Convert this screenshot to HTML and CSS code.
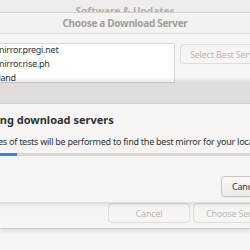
FILE: index.html
```html
<!DOCTYPE html>
<html lang="en">
<head>
  <meta charset="UTF-8">
  <title>Choose a Download Server</title>
  <link rel="stylesheet" href="styles.css">
</head>
<body>
  <div class="parent-title">Software &amp; Updates</div>

  <div class="window-head">Choose a Download Server</div>
  <div class="window-body">
    <div class="mirror-list">
      <div class="mirror-row">mirror.pregi.net</div>
      <div class="mirror-row">mirror.rise.ph</div>
      <div class="mirror-row country">Poland</div>
    </div>
    <button class="btn btn-faded select-best">Select Best Server</button>
  </div>

  <div class="dialog">
    <div class="dialog-titlebar"></div>
    <div class="dialog-content">
      <div class="dialog-heading">Testing download servers</div>
      <div class="dialog-text">A series of tests will be performed to find the best mirror for your location.</div>
      <div class="progress"><div class="progress-fill" style="width: 41px"></div></div>
      <div class="dialog-actions">
        <button class="btn">Cancel</button>
      </div>
    </div>
  </div>

  <div class="window-foot">
    <button class="btn btn-faded foot-cancel">Cancel</button>
    <button class="btn btn-faded foot-choose">Choose Server</button>
  </div>
</body>
</html>
```

FILE: styles.css
```css
body {
  margin: 0;
  width: 250px;
  height: 250px;
  overflow: hidden;
  background: #f6f5f4;
  font-family: 'Noto Sans', 'DejaVu Sans', sans-serif;
  color: #2e3436;
}
.parent-title {
  height: 12px;
  overflow: hidden;
  padding-top: 5px;
  box-sizing: border-box;
  text-align: center;
  font-size: 10px;
  font-weight: bold;
  line-height: 12px;
  color: #b3afab;
  background: #efedec;
}
.window-head {
  height: 20px;
  line-height: 21px;
  text-align: center;
  font-size: 10px;
  font-weight: bold;
  letter-spacing: -0.3px;
  color: #a29e9a;
  background: #f3f2f1;
  border-top: 1px solid #d3cfcb;
  border-bottom: 1px solid #dcd8d4;
}
.window-body {
  display: flex;
  gap: 5px;
  height: 40px;
  padding-top: 9px;
  overflow: hidden;
}
.mirror-list {
  width: 174px;
  background: #fff;
  border: 1px solid #dcd8d4;
  border-left: none;
  flex-shrink: 0;
}
.mirror-row {
  height: 14px;
  line-height: 14px;
  font-size: 9px;
  letter-spacing: -0.25px;
  margin-left: -4px;
  white-space: nowrap;
}
.mirror-row:first-child {
  margin-top: -1px;
}
.mirror-row.country {
  margin-left: -12px;
}
.btn {
  font-family: inherit;
  font-size: 9px;
  letter-spacing: -0.2px;
  color: #2e3436;
  background: linear-gradient(#f8f7f6, #edebe9);
  border: 1px solid #cdc7c2;
  border-radius: 4px;
  padding: 0 8px;
  height: 21px;
  box-shadow: 0 1px 1px rgba(0, 0, 0, 0.06);
  flex-shrink: 0;
  white-space: nowrap;
}
.btn-faded {
  color: #bcb8b4;
  background: #f6f5f4;
  border-color: #e0dcd8;
  box-shadow: none;
}
.select-best {
  height: 20px;
  margin-top: 1px;
  width: 90px;
  text-align: left;
  padding-left: 9px;
}
.dialog {
  position: relative;
  z-index: 2;
  margin-left: -24px;
  width: 310px;
  height: 119px;
  background: #f6f5f4;
  box-shadow: 0 0 7px rgba(0, 0, 0, 0.22);
}
.dialog-titlebar {
  height: 20px;
  background: #dfdcd9;
  border-bottom: 1px solid #d2cdc9;
}
.dialog-heading {
  font-size: 11px;
  font-weight: bold;
  line-height: 16px;
  margin-top: 8px;
  text-indent: -2px;
}
.dialog-text {
  font-size: 9px;
  letter-spacing: -0.25px;
  line-height: 13px;
  margin-top: 7px;
  white-space: nowrap;
}
.progress {
  height: 3px;
  margin-top: 5px;
  background: #dad6d2;
}
.progress-fill {
  height: 100%;
  background: #3584e4;
}
.dialog-actions {
  display: flex;
  margin-top: 20px;
  padding-left: 245px;
}
.dialog-actions .btn {
  width: 60px;
  height: 21px;
  text-align: left;
  padding-left: 10px;
}
.window-foot {
  display: flex;
  gap: 3px;
  padding-left: 108px;
  height: 27px;
  padding-top: 1px;
  box-sizing: border-box;
  border-bottom: 1px solid #d0cbc6;
  box-shadow: 0 2px 4px rgba(0, 0, 0, 0.1);
}
.foot-cancel {
  width: 82px;
  height: 20px;
  text-align: center;
}
.foot-choose {
  width: 80px;
  height: 20px;
  text-align: left;
  padding-left: 12px;
}
```
